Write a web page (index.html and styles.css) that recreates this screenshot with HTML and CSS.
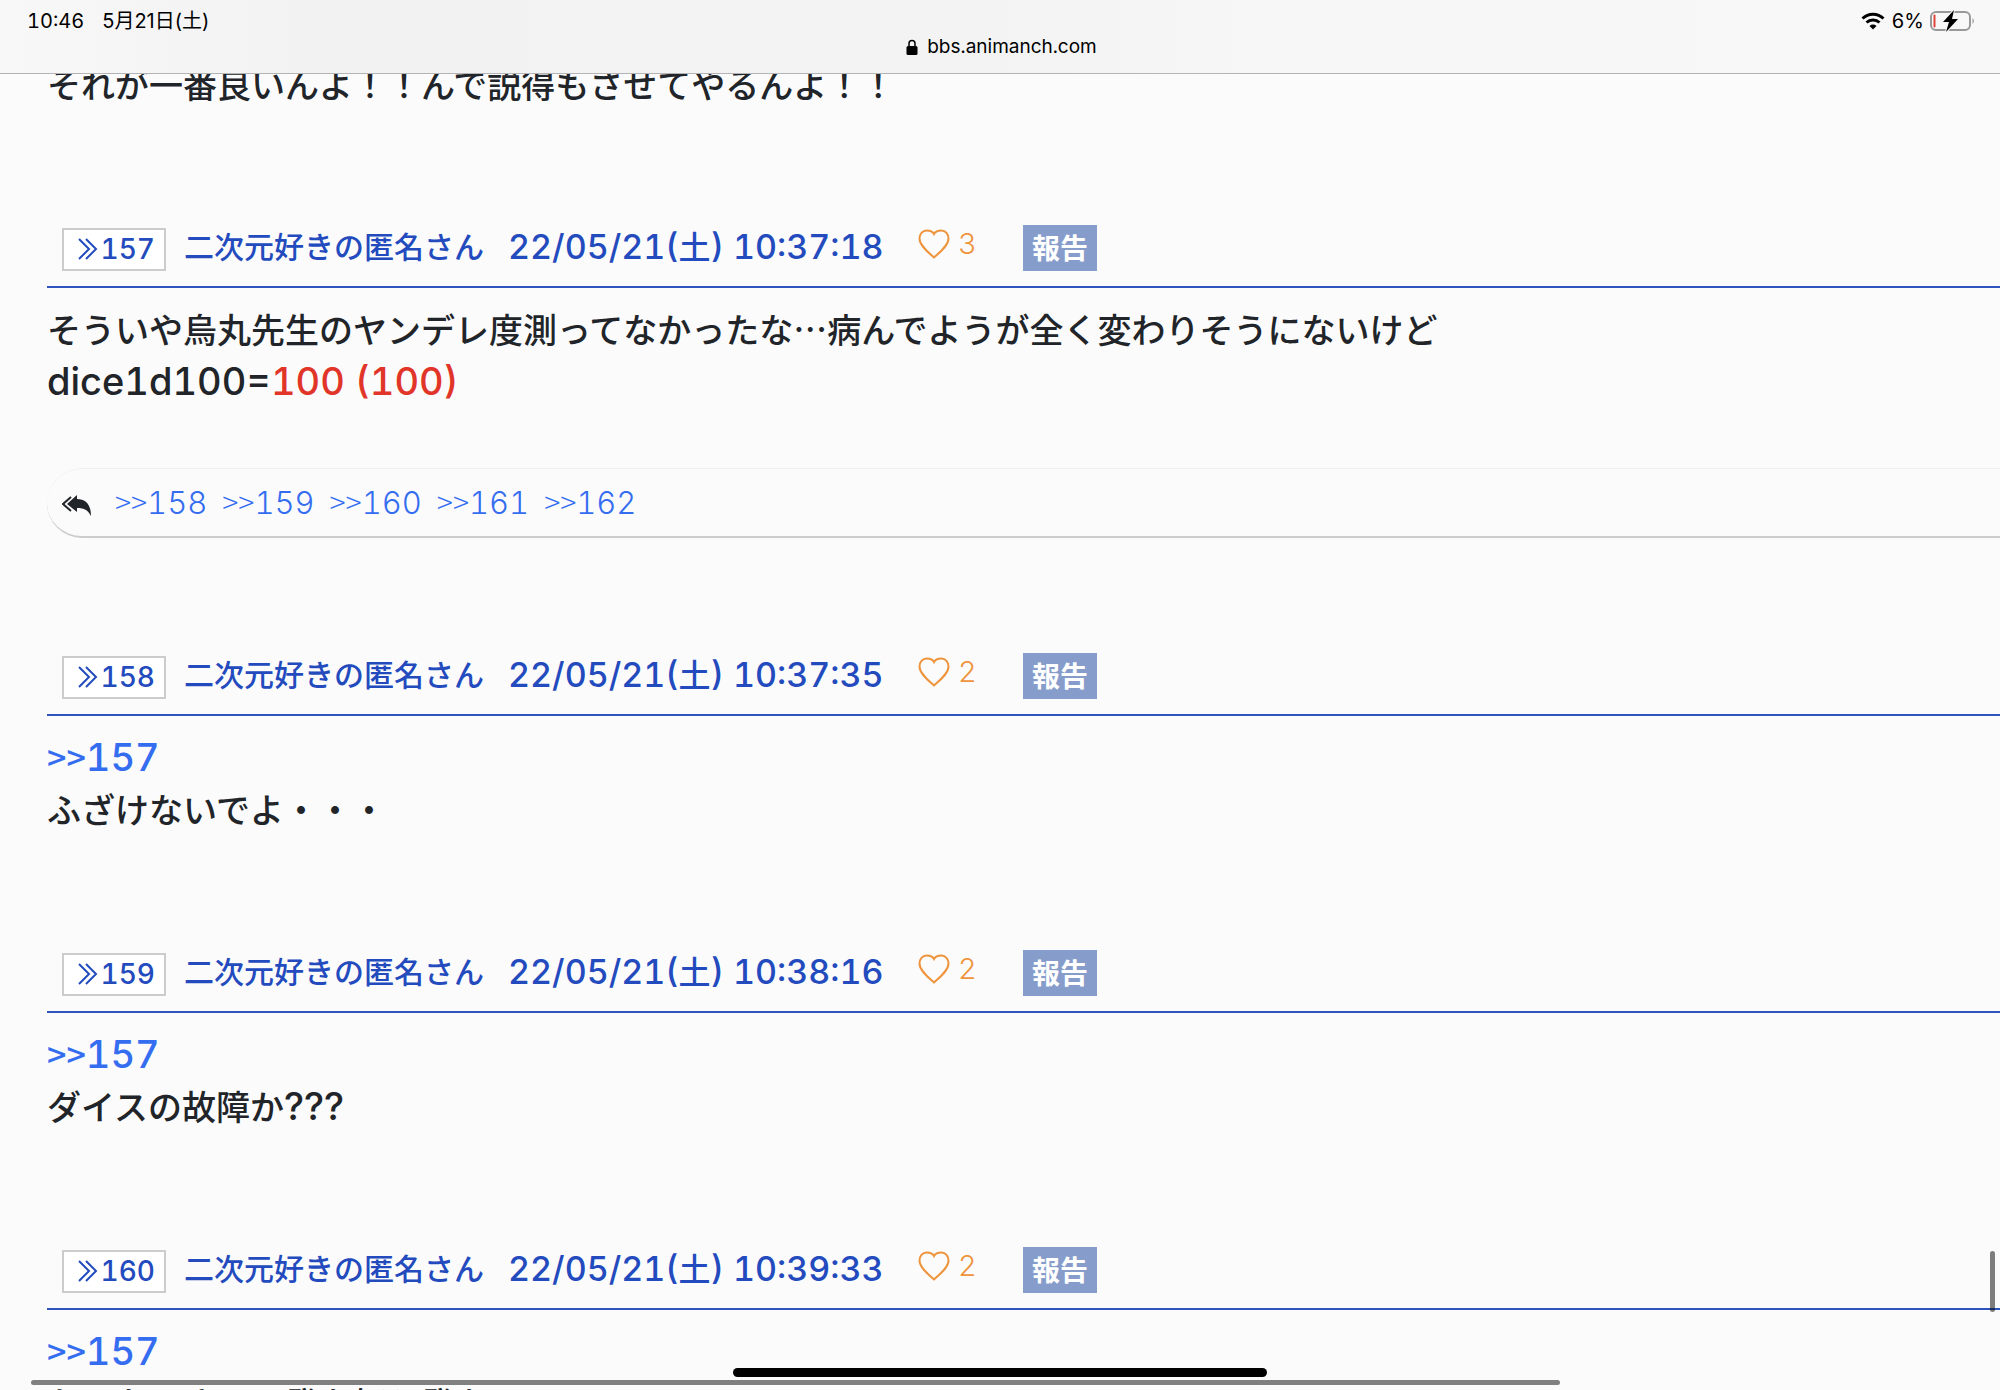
FILE: index.html
```html
<!DOCTYPE html>
<html lang="ja">
<head>
<meta charset="utf-8">
<title>bbs.animanch.com</title>
<link rel="stylesheet" href="styles.css">
</head>
<body>
<svg class="sprite" aria-hidden="true">
  <symbol id="chevrons" viewBox="0 0 20 24"><path d="M1 2l10 10L1 22M8 2l10 10L8 22" fill="none" stroke="currentColor" stroke-width="2"/></symbol>
  <symbol id="heart" viewBox="0 0 32 30"><path d="M16 28.500C10 23 1.500 16.500 1.500 9.500c0-4.500 3-8 7-8 3.500 0 6.500 1.500 7.500 3.500 1-2 4-3.500 7.500-3.500 4 0 7 3.500 7 8 0 7-8.500 13.500-14.500 19z" fill="none" stroke="currentColor" stroke-width="2"/></symbol>
</svg>
<header class="topbar">
  <div class="status">
    <span class="clock">10:46</span>
    <span class="today">5月21日(土)</span>
    <span class="power">
      <svg class="wifi" viewBox="0 0 24 18"><path d="M1.500 6.500a15 15 0 0 1 21 0M5.500 10.500a9.500 9.500 0 0 1 13 0" fill="none" stroke="#000" stroke-width="3"/><path d="M12 17.500L8.500 14a5 5 0 0 1 7 0z"/></svg>
      <span>6%</span>
      <svg class="battery" viewBox="0 0 46 22"><rect x="1" y="2" width="39" height="18" rx="5" fill="none" stroke="#999" stroke-width="2"/><path d="M42.500 8a4 4 0 0 1 0 6z" fill="#999"/><path d="M4 5h1v12H4z" stroke="#e0443c" fill="#e0443c"/><path d="M24 0L13 12h6l-3 10L28 9h-6z" stroke="#f7f7f7" stroke-width="2" paint-order="stroke"/></svg>
    </span>
  </div>
  <div class="address">
    <svg class="lock" viewBox="0 0 12 16"><rect y="7" x="0.500" width="11" height="9" rx="1.500"/><path d="M3 8V4.500a3 3 0 0 1 6 0V8" fill="none" stroke="#000" stroke-width="1.500"/></svg>
    <span>bbs.animanch.com</span>
  </div>
</header>
<main class="thread">
  <article class="post">
    <p class="body">それが一番良いんよ！！んで説得もさせてやるんよ！！</p>
  </article>
  <article class="post">
    <header class="meta">
      <a class="number" href="#157"><svg class="chevrons"><use href="#chevrons"/></svg>157</a>
      <span class="name">二次元好きの匿名さん</span>
      <time class="date">22/05/21(<span class="kanji">土</span>) 10:37:18</time>
      <button class="like"><svg class="heart"><use href="#heart"/></svg>3</button>
      <button class="report">報告</button>
    </header>
    <p class="body">そういや烏丸先生のヤンデレ度測ってなかったな…病んでようが全く変わりそうにないけど<br><span class="latin">dice1d100=<span class="dice">100 (100)</span></span></p>
    <nav class="replies">
      <svg class="reply-all" viewBox="0 0 30 22"><path d="M9 2L1 9l8 7" fill="none" stroke="currentColor" stroke-width="2"/><path d="M15 0v4c9 0 14 6 14 17-3-6-7-8-14-8v4L5 9z" fill="currentColor"/></svg>
      <a href="#158"><span class="gt">&gt;&gt;</span>158</a>
      <a href="#159"><span class="gt">&gt;&gt;</span>159</a>
      <a href="#160"><span class="gt">&gt;&gt;</span>160</a>
      <a href="#161"><span class="gt">&gt;&gt;</span>161</a>
      <a href="#162"><span class="gt">&gt;&gt;</span>162</a>
    </nav>
  </article>
  <article class="post">
    <header class="meta">
      <a class="number" href="#158"><svg class="chevrons"><use href="#chevrons"/></svg>158</a>
      <span class="name">二次元好きの匿名さん</span>
      <time class="date">22/05/21(<span class="kanji">土</span>) 10:37:35</time>
      <button class="like"><svg class="heart"><use href="#heart"/></svg>2</button>
      <button class="report">報告</button>
    </header>
    <p class="body"><a class="quote" href="#157"><span class="gt">&gt;&gt;</span>157</a><br>ふざけないでよ・・・</p>
  </article>
  <article class="post">
    <header class="meta">
      <a class="number" href="#159"><svg class="chevrons"><use href="#chevrons"/></svg>159</a>
      <span class="name">二次元好きの匿名さん</span>
      <time class="date">22/05/21(<span class="kanji">土</span>) 10:38:16</time>
      <button class="like"><svg class="heart"><use href="#heart"/></svg>2</button>
      <button class="report">報告</button>
    </header>
    <p class="body"><a class="quote" href="#157"><span class="gt">&gt;&gt;</span>157</a><br>ダイスの故障か<span class="latin">???</span></p>
  </article>
  <article class="post">
    <header class="meta">
      <a class="number" href="#160"><svg class="chevrons"><use href="#chevrons"/></svg>160</a>
      <span class="name">二次元好きの匿名さん</span>
      <time class="date">22/05/21(<span class="kanji">土</span>) 10:39:33</time>
      <button class="like"><svg class="heart"><use href="#heart"/></svg>2</button>
      <button class="report">報告</button>
    </header>
    <p class="body"><a class="quote" href="#157"><span class="gt">&gt;&gt;</span>157</a><br>お、なはさいつ発を好と発を</p>
  </article>
</main>
<div class="scroll-y"></div>
<div class="scroll-x"></div>
<div class="home-bar"></div>
</body>
</html>
```

FILE: styles.css
```css
* { box-sizing: border-box; }
body {
  margin: 0;
  height: 100vh;
  overflow: hidden;
  background: #fbfbfc;
  color: #212529;
  font-family: Inter, "Noto Sans CJK JP", sans-serif;
  font-variant-numeric: tabular-nums;
}
a { text-decoration: none; color: #356df0; }
button { font: inherit; border: 0; padding: 0; background: none; }
.sprite { position: absolute; width: 0; height: 0; }

.topbar {
  position: fixed;
  top: 0;
  left: 0;
  right: 0;
  z-index: 1;
  height: 74px;
  padding: 8px 24px 0 27px;
  background: linear-gradient(90deg, #f8f8f8, #f2f2f2 15%, #f3f3f3 50%, #f7f7f7 65%, #f8f8f8);
  border-bottom: 1px solid #b4b4b6;
  color: #000;
  font-size: 20px;
  line-height: 26px;
}
.status { display: flex; gap: 18px; }
.today { font-variant-numeric: normal; }
.power { display: flex; align-items: center; gap: 6px; margin-left: auto; }
.wifi { width: 24px; height: 18px; }
.battery { width: 46px; height: 22px; }
.address { display: flex; justify-content: center; align-items: center; gap: 9px; font-size: 19px; }
.lock { width: 12px; height: 16px; }

.thread { padding: 58px 0 0 47px; }
.post { margin-bottom: 115px; }
.meta {
  display: flex;
  align-items: center;
  height: 63px;
  padding: 0 0 16px 15px;
  border-bottom: 2px solid #2d55bd;
  color: #234bbe;
  font-weight: 500;
  white-space: nowrap;
}
.number {
  display: flex;
  align-items: center;
  justify-content: space-between;
  width: 104px;
  height: 43px;
  margin: 3px 18px 0 0;
  padding: 0 9px 0 14px;
  border: 2px solid #ccc;
  background: #fff;
  color: #234bbe;
  font-size: 28px;
}
.chevrons { width: 20px; height: 24px; }
.name { width: 324px; padding-bottom: 6px; font-size: 30px; }
.date { width: 410px; padding-bottom: 6px; font-size: 34px; }
.kanji { font-size: 32px; }
.like {
  display: flex;
  align-items: center;
  gap: 8px;
  width: 105px;
  padding-bottom: 8px;
  color: #ee943c;
  font-size: 29px;
  font-weight: 300;
}
.heart { width: 32px; height: 30px; }
.report {
  width: 74px;
  height: 46px;
  padding-bottom: 2px;
  background: #869dcb;
  color: #fff;
  font-size: 28px;
  font-weight: 600;
}
.body {
  margin: 0;
  padding-top: 15px;
  font-family: "Noto Sans CJK JP", sans-serif;
  font-size: 34px;
  font-weight: 500;
  line-height: 52px;
}
.post:first-child .body { padding-top: 0; }
.latin, .quote { font-family: Inter, sans-serif; font-size: 38px; line-height: 1; }
.dice { color: #e13529; }
.gt { font-family: "Noto Sans CJK JP", sans-serif; font-size: 34px; }
.replies {
  display: flex;
  align-items: center;
  gap: 15px;
  height: 70px;
  margin-top: 61px;
  padding-left: 15px;
  border-top: 1px solid #f0f0f1;
  border-bottom: 2px solid #ccc;
  border-radius: 35px 0 0 35px;
  font-size: 31px;
  font-weight: 300;
}
.replies a { padding-bottom: 4px; }
.reply-all { width: 30px; height: 22px; margin: 7px 8px 0 0; }
.replies .gt { font-size: 30px; }

.scroll-y, .scroll-x, .home-bar { position: fixed; border-radius: 5px; }
.scroll-y { right: 5px; bottom: 78px; width: 5px; height: 61px; background: rgba(0, 0, 0, .5); }
.scroll-x { left: 31px; right: 22%; bottom: 5px; height: 5px; background: #808080; }
.home-bar { left: 50%; bottom: 13px; width: 534px; height: 9px; margin-left: -267px; background: #000; }
```
